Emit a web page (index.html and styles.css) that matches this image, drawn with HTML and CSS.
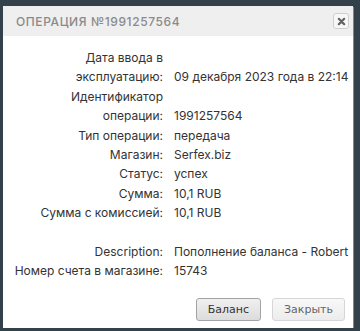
FILE: index.html
```html
<!DOCTYPE html>
<html lang="ru">
<head>
    <meta charset="UTF-8">
    <meta name="viewport" content="width=device-width, initial-scale=1.0">
    <title>Операция №1991257564</title>
    <link rel="stylesheet" href="styles.css">
</head>
<body>
    <div class="dialog">
        <div class="dialog-header">
            <span class="dialog-title">Операция №1991257564</span>
            <button class="dialog-close" title="Закрыть">
                <svg width="9" height="9" viewBox="0 0 9 9"><path d="M1.8 1.8 L7.2 7.2 M7.2 1.8 L1.8 7.2" stroke="#606060" stroke-width="2.2" stroke-linecap="round"/></svg>
            </button>
        </div>
        <div class="dialog-body">
            <table class="details">
                <tr><td class="label">Дата ввода в эксплуатацию:</td><td>09 декабря 2023 года в 22:14</td></tr>
                <tr><td class="label">Идентификатор операции:</td><td>1991257564</td></tr>
                <tr><td class="label">Тип операции:</td><td>передача</td></tr>
                <tr><td class="label">Магазин:</td><td>Serfex.biz</td></tr>
                <tr><td class="label">Статус:</td><td>успех</td></tr>
                <tr><td class="label">Сумма:</td><td>10,1 RUB</td></tr>
                <tr><td class="label">Сумма с комиссией:</td><td>10,1 RUB</td></tr>
                <tr class="spacer"><td colspan="2">&nbsp;</td></tr>
                <tr><td class="label">Description:</td><td>Пополнение баланса - Robert</td></tr>
                <tr><td class="label">Номер счета в магазине:</td><td>15743</td></tr>
            </table>
        </div>
        <div class="dialog-footer">
            <button class="btn">Баланс</button>
            <button class="btn btn-light">Закрыть</button>
        </div>
    </div>
</body>
</html>
```

FILE: styles.css
```css
body {
    margin: 0;
    padding: 6px 0 0 3px;
    background: #33424a;
    font-family: Inter, "Noto Sans", sans-serif;
    color: #333;
}
.dialog {
    width: 350px;
    background: #fff;
    box-shadow: 1px 1px 0 #7d878c;
}
.dialog-header {
    height: 30px;
    display: flex;
    align-items: center;
    justify-content: space-between;
    padding: 0 4px 0 13px;
    background: #efefef;
}
.dialog-title {
    font-size: 12px;
    font-weight: 500;
    text-transform: uppercase;
    letter-spacing: 0.6px;
    color: #8a8a8a;
}
.dialog-close {
    width: 16px;
    height: 16px;
    padding: 0;
    display: flex;
    align-items: center;
    justify-content: center;
    border: 1px solid #cfcfcf;
    border-radius: 3px;
    background: #f7f7f7;
    cursor: pointer;
}
.dialog-body {
    padding: 12px 0 0 10px;
}
.details {
    border-collapse: collapse;
    font-size: 12px;
    line-height: 19.4px;
}
.details td {
    padding: 0;
    vertical-align: bottom;
}
.details .label {
    width: 150px;
    padding-right: 11px;
    text-align: right;
}
.dialog-footer {
    display: flex;
    justify-content: flex-end;
    gap: 11px;
    padding: 17px 8px 7px 0;
}
.btn {
    height: 23px;
    padding: 0 11px;
    font-family: "DejaVu Sans", sans-serif;
    font-size: 11px;
    color: #333;
    background: linear-gradient(#f0f0f0, #dcdcdc);
    border: 1px solid #a3a3a3;
    border-radius: 3px;
    cursor: pointer;
}
.btn-light {
    color: #666;
    background: linear-gradient(#f8f8f8, #ececec);
    border-color: #d6d6d6;
}
```
